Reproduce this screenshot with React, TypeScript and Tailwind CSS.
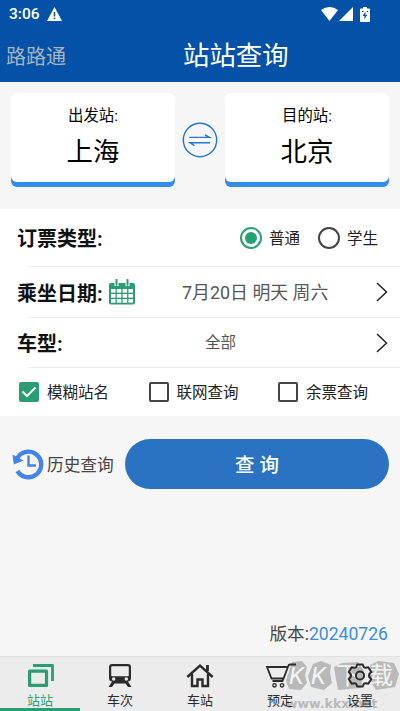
import { useState, type ReactNode } from 'react'
import clsx from 'clsx'

interface StationCardProps {
  label: string
  name: string
}

function StationCard({ label, name }: StationCardProps) {
  return (
    <button className="mb-[5px] flex h-[89px] w-[164px] flex-col items-center rounded-[6px] bg-white pt-[12px] text-black shadow-[0_5px_0_#338bea]">
      <span className="text-[15.4px] leading-[22px]">{label}</span>
      <span className="mt-[6px] text-[26.4px] leading-[38px]">{name}</span>
    </button>
  )
}

function StatusBar() {
  return (
    <div className="flex h-[28px] items-center pl-[9px] pr-[30px] text-white">
      <span className="pt-[2px] text-[15.5px] font-medium leading-none">3:06</span>
      <svg className="ml-[7px] h-[14px] w-[15px]" viewBox="0 0 15 14">
        <path d="M7.5 0L15 14H0Z" fill="currentColor" />
        <path d="M7.5 5v4.5M7.5 10.6v1.6" stroke="#0352a7" strokeWidth="1.5" />
      </svg>
      <svg className="ml-auto h-[14px] w-[17px]" viewBox="0 0 17 14">
        <path d="M0 3Q8.5-3 17 3L8.5 14Z" fill="currentColor" />
      </svg>
      <svg className="ml-[1px] h-[14px] w-[14px]" viewBox="0 0 14 14">
        <path d="M14 0V14H0Z" fill="currentColor" />
      </svg>
      <svg className="ml-[7px] h-[15px] w-[10px]" viewBox="0 0 10 15">
        <path d="M3 0h4v1.6h2.2q.8 0 .8.8v11.8q0 .8-.8.8H.8q-.8 0-.8-.8V2.4q0-.8.8-.8H3Z" fill="currentColor" />
        <path d="M5.6 4.5L2.6 9h2l-.4 3.5 3.2-4.7H5.3Z" fill="#0352a7" />
        <path d="M2 4.5h1.5M6.7 4.5h1.5" stroke="#0352a7" />
      </svg>
    </div>
  )
}

function SwapIcon() {
  return (
    <svg className="h-[36px] w-[36px]" viewBox="0 0 36 36" fill="none" stroke="#2478c8" strokeWidth="1.4">
      <circle cx="18" cy="18" r="16.7" />
      <path d="M7.5 15.4H27.5L23 12.8M28 20.8H8L12.5 23.6" />
    </svg>
  )
}

function CalendarIcon() {
  return (
    <svg className="h-[26px] w-[26px]" viewBox="0 0 26 26">
      <path d="M0 6q0-2 2-2h22q2 0 2 2v17.5q0 2-2 2H2q-2 0-2-2Z" fill="#2a9d74" />
      <path d="M7.5 0v7M18.5 0v7" stroke="#fff" strokeWidth="4" />
      <path d="M7.5.8v5M18.5.8v5" stroke="#2a9d74" strokeWidth="2" strokeLinecap="round" />
      <g fill="#fff">
        {[10, 15, 20].map((y) =>
          [2, 7.8, 13.6, 19.4].map((x) => <rect key={`${x}-${y}`} x={x} y={y} width="4.5" height="3.7" />)
        )}
      </g>
    </svg>
  )
}

function Chevron() {
  return (
    <svg className="h-[20px] w-[12px]" viewBox="0 0 12 20" fill="none" stroke="#222" strokeWidth="1.5">
      <path d="M1 1L10.5 10L1 19" />
    </svg>
  )
}

interface RadioProps {
  label: string
  checked: boolean
  onSelect: () => void
}

function Radio({ label, checked, onSelect }: RadioProps) {
  return (
    <button role="radio" aria-checked={checked} onClick={onSelect} className="flex items-center gap-[7px]">
      <span
        className={clsx(
          'flex h-[22px] w-[22px] items-center justify-center rounded-full border-2',
          checked ? 'border-[#26a075]' : 'border-[#444]'
        )}
      >
        {checked && <span className="h-[12px] w-[12px] rounded-full bg-[#26a075]" />}
      </span>
      <span className="pt-[3px] text-[15.5px] leading-[22px] text-[#222]">{label}</span>
    </button>
  )
}

interface CheckProps {
  label: string
  checked: boolean
  onToggle: () => void
}

function Check({ label, checked, onToggle }: CheckProps) {
  return (
    <button role="checkbox" aria-checked={checked} onClick={onToggle} className="flex w-[129.5px] shrink-0 items-center gap-[8px]">
      <span
        className={clsx(
          'flex h-[20px] w-[20px] shrink-0 items-center justify-center rounded-[2px] border-2',
          checked ? 'border-[#2a9d74] bg-[#2a9d74]' : 'border-[#444]'
        )}
      >
        {checked && (
          <svg className="h-[12px] w-[16px] shrink-0" viewBox="0 0 16 12" fill="none" stroke="#fff" strokeWidth="2">
            <path d="M1.5 5.5L6 10L14.5 1.5" />
          </svg>
        )}
      </span>
      <span className="whitespace-nowrap pt-[4px] text-[15.5px] text-[#222]">{label}</span>
    </button>
  )
}

function HistoryIcon() {
  return (
    <svg className="h-[32px] w-[32px]" viewBox="0 0 32 32" fill="none" stroke="#4384ea">
      <path d="M5.2 10.2A12.8 12.8 0 1 1 5.4 23" strokeWidth="4.4" />
      <path d="M.5 6.5L1.8 16.5L11.5 12.5Z" fill="#4384ea" stroke="none" />
      <path d="M16.5 7.5V17.5H24" strokeWidth="2.4" />
    </svg>
  )
}

const tabs: { id: string; label: string; icon: ReactNode }[] = [
  {
    id: 'route',
    label: '站站',
    icon: (
      <g fill="none" stroke="currentColor">
        <path d="M2.6 8.2H19.5V22.4H2.6Z" strokeWidth="3.2" strokeLinejoin="round" />
        <path d="M6 2.5H25.5V18" strokeWidth="2.8" strokeLinejoin="round" />
      </g>
    ),
  },
  {
    id: 'train',
    label: '车次',
    icon: (
      <g>
        <path d="M5 1H21q3 0 3 3V15q0 3-3 3.5L24.5 24H21L18.5 20.5H7.5L5 24H1.5L5 18.5Q2 18 2 15V4Q2 1 5 1Z" fill="currentColor" />
        <rect x="4.2" y="3.3" width="17.6" height="10" rx="1" fill="#ececec" />
        <circle cx="6.7" cy="16" r="1.7" fill="#ececec" />
        <circle cx="19.3" cy="16" r="1.7" fill="#ececec" />
      </g>
    ),
  },
  {
    id: 'station',
    label: '车站',
    icon: (
      <g fill="none" stroke="currentColor" strokeWidth="2.4">
        <path d="M.3 14L13 2.5L25.7 14" />
        <path d="M5 11V23H10.5V16.5H15.5V23H21V11" />
        <path d="M20.5 2V8" strokeWidth="2.8" />
      </g>
    ),
  },
  {
    id: 'order',
    label: '预定',
    icon: (
      <g fill="none" stroke="currentColor" strokeWidth="1.8" transform="translate(-2 0)">
        <path d="M22.5 4H2L6.5 15.5H18.5L23.5 2.5Q24 1.5 25.5 1.5H31M18.5 15.5L17.5 18H7.5" />
        <circle cx="9.5" cy="22.3" r="1.7" strokeWidth="1.3" />
        <circle cx="17" cy="22.3" r="1.7" strokeWidth="1.3" />
      </g>
    ),
  },
  {
    id: 'settings',
    label: '设置',
    icon: (
      <g fill="none" stroke="currentColor" strokeWidth="2" strokeLinejoin="round">
        <path d="M9.3 4L10.2 1.5H15.8L16.7 4Q17.5 4.8 18.8 4.7L21.3 4.3L24.3 9L22.3 11Q21.6 12.5 22.3 14L24.3 16L21.3 20.7L18.8 20.3Q17.5 20.2 16.7 21L15.8 23.5H10.2L9.3 21Q8.5 20.2 7.2 20.3L4.7 20.7L1.7 16L3.7 14Q4.4 12.5 3.7 11L1.7 9L4.7 4.3L7.2 4.7Q8.5 4.8 9.3 4Z" />
        <circle cx="13" cy="12.5" r="4.1" />
      </g>
    ),
  },
]

function Watermark() {
  return (
    <div className="pointer-events-none absolute left-[284px] top-[2px] h-[53px] w-[116px] text-[#b9b9b9]">
      <svg className="absolute left-0 top-0 h-[33px] w-[116px]" viewBox="0 0 116 33" fill="currentColor">
        <path d="M8 3L18 2L23 8L21 16L23 24L17 31L5 30L2 22Z" />
        <path d="M29 5L37 2L47 6L46 14L48 24L40 31L27 28L24 17Z" />
        <path d="M50 8L58 4L74 3L80 12L77 29L54 31L52 20Z" />
        <path d="M86 6L94 2L110 4L115 15L111 28L92 31L86 22Z" />
      </svg>
      <div className="absolute left-[5px] top-[4px] flex text-[24px] leading-[26px] text-[#f4f4f4]">
        <span className="w-[22px] italic">K</span>
        <span className="w-[25px] italic">K</span>
        <span className="w-[33px]">下</span>
        <span>载</span>
      </div>
      <div className="absolute left-[2px] top-[36px] font-['DejaVu_Sans'] text-[12.5px] font-bold leading-[18px]">www.kkx.net</div>
    </div>
  )
}

export default function App() {
  const [ticketType, setTicketType] = useState('普通')
  const [options, setOptions] = useState<Record<string, boolean>>({
    模糊站名: true,
    联网查询: false,
    余票查询: false,
  })
  const [activeTab, setActiveTab] = useState('route')

  return (
    <div
      lang="zh-CN"
      className="flex h-[711px] w-[400px] flex-col overflow-hidden bg-[#f6f6f6] font-[Roboto,'Noto_Sans_CJK_SC',sans-serif]"
    >
      <header className="h-[82px] shrink-0 bg-[#0352a7]">
        <StatusBar />
        <div className="flex h-[54px] items-center pl-[6px] pt-[3px]">
          <span className="w-[177px] text-[20px] text-[#aab4c1]">路路通</span>
          <h1 className="text-[26.4px] text-white">站站查询</h1>
        </div>
      </header>

      {/* 출발/도착역 */}
      <section className="flex items-center justify-between pl-[11px] pr-[11px] pt-[11px]">
        <StationCard label="出发站:" name="上海" />
        <button>
          <SwapIcon />
        </button>
        <StationCard label="目的站:" name="北京" />
      </section>

      {/* 조회 조건 */}
      <section className="mt-[22px] h-[207px] shrink-0 bg-white pl-[17px]">
        <div className="flex h-[57px] items-center">
          <h2 className="pt-[3px] text-[20px] font-bold text-[#111]">订票类型:</h2>
          <div role="radiogroup" className="ml-auto mr-[22px] flex gap-[18px]">
            <Radio label="普通" checked={ticketType === '普通'} onSelect={() => setTicketType('普通')} />
            <Radio label="学生" checked={ticketType === '学生'} onSelect={() => setTicketType('学生')} />
          </div>
        </div>
        <hr className="ml-[11px] border-[#ececec]" />
        <div className="flex h-[50px] items-center pr-[12px]">
          <h2 className="w-[92px] whitespace-nowrap pt-[3px] text-[20px] font-bold text-[#111]">乘坐日期:</h2>
          <CalendarIcon />
          <span className="ml-[47px] whitespace-nowrap pt-[2px] text-[17.9px] text-[#555]">7月20日 明天 周六</span>
          <span className="ml-auto">
            <Chevron />
          </span>
        </div>
        <hr className="ml-[11px] border-[#ececec]" />
        <div className="flex h-[49px] items-center pr-[12px]">
          <h2 className="w-[188px] pt-[2px] text-[20px] font-bold text-[#111]">车型:</h2>
          <span className="pt-[3px] text-[15.5px] text-[#555]">全部</span>
          <span className="ml-auto">
            <Chevron />
          </span>
        </div>
        <hr className="ml-[11px] border-[#ececec]" />
        <div className="flex h-[48px] items-center pl-[2px]">
          {Object.entries(options).map(([label, checked]) => (
            <Check
              key={label}
              label={label}
              checked={checked}
              onToggle={() => setOptions({ ...options, [label]: !checked })}
            />
          ))}
        </div>
      </section>

      <section className="mt-[23px] flex items-center pl-[12px] pr-[11px]">
        <button className="flex w-[113px] items-center gap-[3px] text-[16.7px] text-[#444]">
          <HistoryIcon />
          <span className="whitespace-nowrap pt-[3px]">历史查询</span>
        </button>
        <button className="h-[50px] flex-1 rounded-full bg-[#2b72c3] pt-[3px] text-[19.5px] font-medium text-white">查 询</button>
      </section>

      <div className="mt-auto pb-[8px] pr-[12px] text-right text-[17.6px] leading-[28px] text-[#444]">
        版本:<span className="text-[#3b8de0]">20240726</span>
      </div>

      <nav className="relative flex h-[55px] shrink-0 border-t border-[#e2e2e2] bg-[#ececec]">
        <Watermark />
        {tabs.map((tab) => (
          <button
            key={tab.id}
            onClick={() => setActiveTab(tab.id)}
            className={clsx(
              'relative flex flex-1 flex-col items-center border-b-3 pt-[6px]',
              activeTab === tab.id ? 'border-[#2a9d74] text-[#2a9d74]' : 'border-transparent text-[#2b2b2b]'
            )}
          >
            <svg className="h-[26px] w-[26px] shrink-0 overflow-visible" viewBox="0 0 26 26">
              {tab.icon}
            </svg>
            <span className="mt-[3px] text-[13px] leading-[18px]">{tab.label}</span>
          </button>
        ))}
      </nav>
    </div>
  )
}
